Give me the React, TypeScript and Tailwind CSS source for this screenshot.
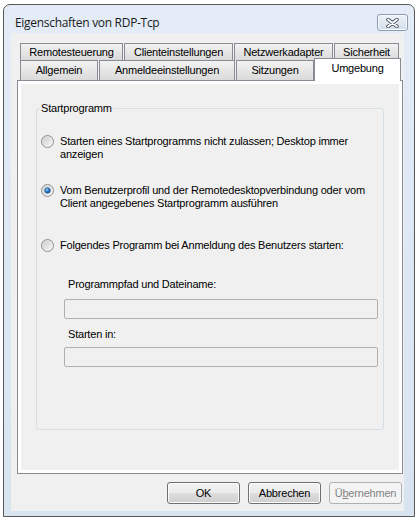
import type { ReactNode } from "react";

const font = "font-['Liberation_Sans',Arial,sans-serif]";

const backTabs = [
  { label: "Remotesteuerung", w: "w-[103px]" },
  { label: "Clienteinstellungen", w: "w-[109px]" },
  { label: "Netzwerkadapter", w: "w-[99px]" },
  { label: "Sicherheit", w: "w-[65px]" },
];

const frontTabs = [
  { label: "Allgemein", w: "w-[78px]" },
  { label: "Anmeldeeinstellungen", w: "w-[136px]" },
  { label: "Sitzungen", w: "w-[78px]" },
];

export default function App() {
  return (
    <div className={`w-[415px] h-[519px] bg-white overflow-hidden pt-[4px] pl-[3px] ${font} text-[11px] leading-[13px] tracking-[-0.2px] text-black`}>
      <div className="w-[412px] h-[513px] border border-[#585858] rounded-t-[7px] bg-gradient-to-b from-[#e3ecf7] to-[#d9e4f1] flex flex-col">
        {/* Titelleiste */}
        <div className="h-[28px] flex justify-between pl-[11px] pr-[6px]">
          <span className="pt-[10px] text-[12px] leading-[16px] text-[#1b1b1b] font-['Open_Sans','Liberation_Sans',sans-serif] tracking-[-0.3px]">
            Eigenschaften von RDP-Tcp
          </span>
          <CloseButton />
        </div>

        <div className="ml-[7px] w-[393px] h-[478px] bg-[#f0f0f0] flex flex-col">
          <div className="ml-[6px] mt-[10px] w-[386px] flex flex-col">
            <div className="flex pl-[3px] gap-[1px] h-[17px]">
              {backTabs.map((t) => (
                <Tab key={t.label} className={t.w}>
                  {t.label}
                </Tab>
              ))}
            </div>
            <div className="flex items-end pl-[3px] h-[20px]">
              {frontTabs.map((t, i) => (
                <Tab key={t.label} className={`${t.w} h-[20px] ${i > 0 ? "ml-[1px]" : ""}`}>
                  {t.label}
                </Tab>
              ))}
              <div className="relative z-10 w-[87px] h-[23px] -mb-[1px] bg-white border border-b-0 border-[#898c95] flex justify-center pt-[3px]">
                Umgebung
              </div>
            </div>

            {/* Registerseite */}
            <div className="h-[394px] border border-[#898c95] bg-white p-[3px]">
              <div className="h-full bg-[#f0f0f0] pt-[24px] pl-[15px]">
                <GroupBox />
              </div>
            </div>
          </div>

          <div className="flex mt-[8px] pl-[156px] gap-[8px]">
            <DlgButton>OK</DlgButton>
            <DlgButton>Abbrechen</DlgButton>
            <DlgButton disabled>
              Ü<span className="underline underline-offset-[1px]">b</span>ernehmen
            </DlgButton>
          </div>
        </div>
      </div>
    </div>
  );
}

function GroupBox() {
  return (
    <div className="relative w-[348px] h-[322px] border border-[#d5dfe5] rounded-[3px] pl-[4px]">
      <span className="absolute -top-[7px] left-[3px] px-[1px] bg-[#f0f0f0]">Startprogramm</span>

      <div className="flex mt-[26px]">
        <Radio />
        <span className="ml-[6px]">
          Starten eines Startprogramms nicht zulassen; Desktop immer
          <br />
          anzeigen
        </span>
      </div>

      <div className="flex mt-[23px]">
        <Radio checked />
        <span className="ml-[6px]">
          Vom Benutzerprofil und der Remotedesktopverbindung oder vom
          <br />
          Client angegebenes Startprogramm ausführen
        </span>
      </div>

      <div className="flex mt-[29px]">
        <Radio />
        <span className="ml-[6px]">Folgendes Programm bei Anmeldung des Benutzers starten:</span>
      </div>

      <div className="pl-[23px]">
        <div className="mt-[26px] pl-[4px]">Programmpfad und Dateiname:</div>
        <div className="mt-[8px] w-[314px] h-[20px] border border-[#afafaf] rounded-[2px] bg-[#f0f0f0]" />
        <div className="mt-[9px] pl-[4px]">Starten in:</div>
        <div className="mt-[6px] w-[314px] h-[20px] border border-[#afafaf] rounded-[2px] bg-[#f0f0f0]" />
      </div>
    </div>
  );
}

function Tab({ children, className }: { children: ReactNode; className?: string }) {
  return (
    <div
      className={`${className ?? ""} h-full border border-b-0 border-[#898c95] bg-gradient-to-b from-[#f2f2f2] to-[#dadada] flex items-center justify-center whitespace-nowrap`}
    >
      {children}
    </div>
  );
}

function Radio({ checked }: { checked?: boolean }) {
  return (
    <svg width="13" height="13" viewBox="0 0 13 13" className="shrink-0">
      <defs>
        <linearGradient id="rOuter" x1="0" y1="0" x2="1" y2="1">
          <stop offset="0" stopColor="#d2d2d2" />
          <stop offset="1" stopColor="#fdfdfd" />
        </linearGradient>
        <linearGradient id="rInner" x1="0" y1="0" x2="1" y2="1">
          <stop offset="0" stopColor="#cfcfcf" />
          <stop offset="1" stopColor="#f4f4f4" />
        </linearGradient>
        <radialGradient id="rDot" cx="0.4" cy="0.35" r="0.7">
          <stop offset="0" stopColor="#9fd3f7" />
          <stop offset="0.5" stopColor="#2a7fcf" />
          <stop offset="1" stopColor="#10437f" />
        </radialGradient>
      </defs>
      <circle cx="6.5" cy="6.5" r="6" fill="url(#rOuter)" stroke="#8e8f8f" />
      <circle cx="6.5" cy="6.5" r="4" fill="url(#rInner)" />
      {checked && <circle cx="6.5" cy="6.5" r="2.8" fill="url(#rDot)" stroke="#1c4f8a" strokeWidth="0.6" />}
    </svg>
  );
}

function DlgButton({ children, disabled }: { children: ReactNode; disabled?: boolean }) {
  return (
    <div
      className={`w-[73px] h-[22px] rounded-[3px] border flex items-center justify-center ${
        disabled
          ? "border-[#adb2b5] bg-[#f4f4f4] text-[#838383]"
          : "border-[#707070] bg-[linear-gradient(#f2f2f2_0%,#ebebeb_50%,#dddddd_50%,#cfcfcf_100%)] shadow-[inset_0_0_0_1px_#fcfcfc]"
      }`}
    >
      <span>{children}</span>
    </div>
  );
}

function CloseButton() {
  return (
    <div className="mt-[9px] w-[31px] h-[17px] rounded-[3px] border border-[#8d9bb0] bg-gradient-to-b from-[#eef3f9] to-[#d3dde9] shadow-[inset_0_0_0_1px_#f7fafd] flex items-center justify-center">
      <svg width="13" height="10" viewBox="0 0 13 10">
        <path d="M2 1.5 L11 8.5 M11 1.5 L2 8.5" stroke="#4f5a66" strokeWidth="3.6" strokeLinecap="round" />
        <path d="M2 1.5 L11 8.5 M11 1.5 L2 8.5" stroke="#ffffff" strokeWidth="1.8" strokeLinecap="round" />
      </svg>
    </div>
  );
}
